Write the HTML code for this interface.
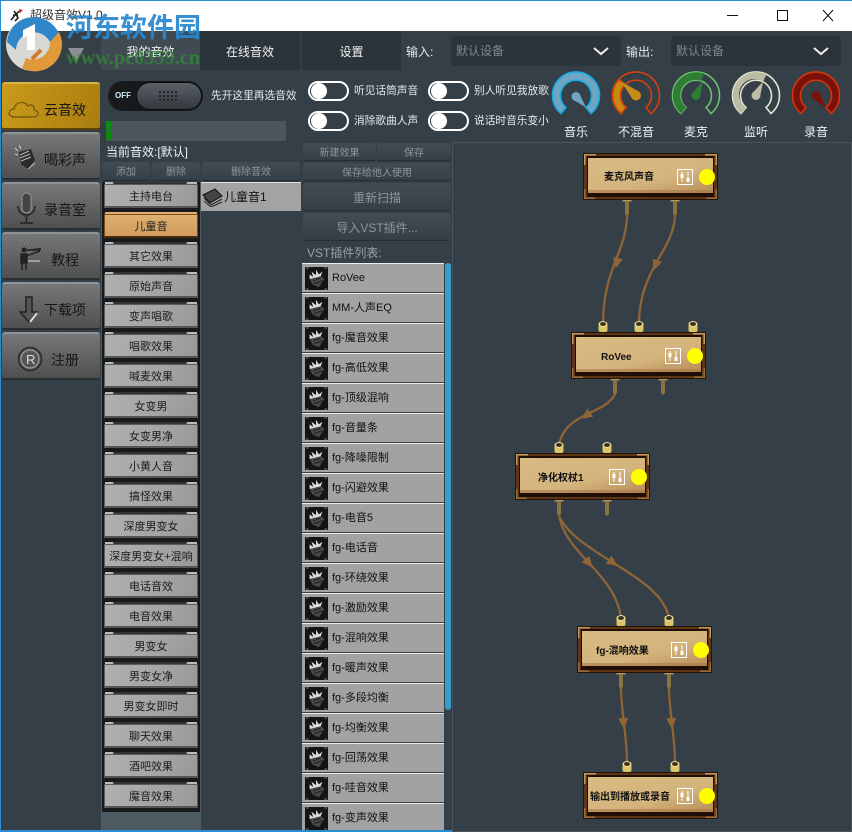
<!DOCTYPE html>
<html><head><meta charset="utf-8"><style>
*{box-sizing:border-box}
html,body{margin:0;padding:0;width:852px;height:832px;overflow:hidden;background:#343f47;font-family:"Liberation Sans","Noto Sans CJK SC",sans-serif}
div,span{position:absolute;white-space:nowrap}
.side{left:2px;width:98px;height:48px;border-radius:3px;border-top:2px solid #8f9396;border-bottom:2px solid #2b2e30;background:repeating-linear-gradient(-55deg,rgba(255,255,255,.05) 0 1px,rgba(0,0,0,.05) 1px 3px),linear-gradient(#77797a,#4d4f50);color:#161616;font-size:14px;line-height:52px}
.side span{top:0}
.side svg{position:absolute;left:0;top:-2px}
.it{left:102px;width:98px;height:30px;background:#17191a}
.it i{position:absolute;left:2px;top:2px;width:94px;height:24px;background:linear-gradient(115deg,#b0b0b0,#a4a4a4 60%,#989898);border:1px solid #5c5c5c;border-bottom:2px solid #555;font-style:normal;text-align:center;font-size:11px;line-height:25px;color:#1c1c1c}
.it b{position:absolute;left:3px;top:0;width:92px;height:2px;background:linear-gradient(90deg,#bbb 8%,#333 10% 88%,#bbb 90%)}
.v{left:302px;width:142px;height:29px;background:#a2a2a2;border-top:1px solid #eee;font-size:11px;color:#111}
.v span{left:30px;top:6px;line-height:16px}
.v svg{position:absolute;left:3px;top:3px}
.btn{background:linear-gradient(#414c54,#353f47);border-bottom:1px solid #262d32;border-radius:3px;color:#8e969b;text-align:center;font-size:10px}
.sw{width:41px;height:20px;border:2px solid #fff;border-radius:10px;background:#343f47}
.sw:after{content:"";position:absolute;left:1px;top:0;width:16px;height:16px;border-radius:50%;background:#fff}
.t{font-size:10.7px;color:#e6e9ea;line-height:14px}
.lab{font-size:12px;color:#f0f2f3;line-height:16px;width:60px;text-align:center;top:124px}
.sel{background:#2b343a;border-radius:3px;top:36px;height:30px;width:170px;color:#7f878c;font-size:12px;line-height:30px;padding-left:5px}
.tab{top:31px;height:39px;color:#f2f2f2;font-size:12px;line-height:43px;text-align:center}
</style></head><body>
<div style="left:0;top:0;width:852px;height:31px;background:#fff;border-top:1px solid #2a8dd4"></div>
<div style="left:0;top:0;width:1px;height:832px;background:#2a8dd4"></div>
<div style="left:0;top:830px;width:852px;height:2px;background:#2a8dd4"></div>
<div style="left:30px;top:7px;font-size:12px;line-height:16px;color:#333">超级音效V1.0</div>
<svg style="position:absolute;left:9px;top:7px" width="16" height="16"><path d="M2 13 7 7 5 4M7 7 12 3M7 7 9 11 6 14M4 8H9" stroke="#222" stroke-width="1.6" fill="none"/><path d="M10 2 14 3 11 6Z" fill="#d22"/></svg>
<svg style="position:absolute;left:725px;top:8px" width="115" height="16"><path d="M2 7.5H13" stroke="#111"/><rect x="52.500" y="2.500" width="10" height="10" fill="none" stroke="#111"/><path d="M98 2 108 13M108 2 98 13" stroke="#111"/></svg>

<div class="tab" style="left:101px;width:99px;background:#3f4a52">我的音效</div>
<div class="tab" style="left:200px;width:100px;background:#2b343a">在线音效</div>
<div class="tab" style="left:302px;width:99px;background:#2b343a">设置</div>
<svg style="position:absolute;left:68px;top:48px" width="16" height="15"><path d="M0 0H16L8 15Z" fill="#8a9093"/></svg>
<div class="t" style="left:406px;top:45px;font-size:12px">输入:</div>
<div class="sel" style="left:451px">默认设备<svg style="position:absolute;left:142px;top:11px" width="16" height="9"><path d="M1 1 8 7 15 1" stroke="#eee" stroke-width="2" fill="none"/></svg></div>
<div class="t" style="left:626px;top:45px;font-size:12px">输出:</div>
<div class="sel" style="left:671px">默认设备<svg style="position:absolute;left:142px;top:11px" width="16" height="9"><path d="M1 1 8 7 15 1" stroke="#eee" stroke-width="2" fill="none"/></svg></div>

<!-- side -->
<div class="side" style="top:82px;background:repeating-linear-gradient(-55deg,rgba(255,230,120,.1) 0 1px,rgba(120,80,0,.08) 1px 3px),linear-gradient(110deg,#cc9c1a,#bb8c12 50%,#a87c0c);border-top-color:#d8b445;border-bottom-color:#5b4405"><span style="left:42px">云音效</span><svg width="42" height="48"><path d="M12 35C5 35 6 27 12 27 13 20 22 18 26 24 30 21 33 25 32 28 38 29 37 35 32 35Z" fill="none" stroke="#7a5c0c" stroke-width="1.4"/></svg></div>
<div class="side" style="top:132px"><span style="left:42px">喝彩声</span><svg width="42" height="48"><path d="M17 20 29 17 33 28 26 37 19 32Z" fill="#2a2a2a"/><path d="M18 23 27 19M18 26 28 22M19 29 29 25M26 37 33 31" stroke="#bbb" fill="none"/><path d="M13 16 16 19M13 22 16 23M17 13 19 17" stroke="#ccc"/></svg></div>
<div class="side" style="top:182px"><span style="left:42px">录音室</span><svg width="42" height="48"><rect x="20" y="11" width="9" height="20" rx="4.500" fill="#444" stroke="#999"/><path d="M16 24C16 36 33 36 33 24M24.500 34V40M18 41H31" fill="none" stroke="#222" stroke-width="1.500"/></svg></div>
<div class="side" style="top:232px"><span style="left:49px">教程</span><svg width="42" height="48"><circle cx="22" cy="18" r="2.500" fill="#222"/><path d="M19 22H25V31H19ZM20 31V38M24 31V38M24 24 38 19M38 16V18H22" stroke="#222" stroke-width="1.500" fill="#222"/><path d="M26 29H38" stroke="#ddd"/></svg></div>
<div class="side" style="top:282px"><span style="left:42px">下载项</span><svg width="42" height="48"><path d="M24 15H30V30H35L27 40 18 30H24Z" fill="#555" stroke="#222" stroke-width="1.500"/><path d="M28 40 35 31" stroke="#ddd" stroke-width="2"/></svg></div>
<div class="side" style="top:332px"><span style="left:49px">注册</span><svg width="42" height="48"><circle cx="28" cy="27" r="11.500" fill="#555" stroke="#2a2a2a" stroke-width="1.500"/><circle cx="28" cy="27" r="9" fill="none" stroke="#aaa"/><text x="24" y="32" font-size="13" font-family="Liberation Sans" fill="#ddd">R</text></svg></div>

<!-- off switch -->
<div style="left:108px;top:81px;width:95px;height:30px;border-radius:15px;background:#17191b"></div>
<div style="left:136px;top:82px;width:66px;height:28px;border-radius:14px;background:linear-gradient(#5a6167,#33383d);border:1px solid #0d0e10"></div>
<div style="left:115px;top:91px;font-size:8px;font-weight:bold;line-height:10px;color:#cfeff5">OFF</div>
<div style="left:158px;top:90px;width:20px;height:12px;background:radial-gradient(circle,#22262a 1px,transparent 1.3px) 0 0/4px 4px"></div>
<div class="t" style="left:211px;top:89px">先开这里再选音效</div>
<div style="left:106px;top:121px;width:180px;height:20px;background:#4b555b"></div>
<div style="left:106px;top:121px;width:5px;height:9px;background:#0a8a10"></div>
<div style="left:106px;top:131px;width:5px;height:9px;background:#0a8a10"></div>
<div style="left:106px;top:144px;font-size:12px;line-height:16px;color:#f0f2f3">当前音效:[默认]</div>

<div class="btn" style="left:102px;top:162px;width:48px;height:19px;line-height:22px">添加</div>
<div class="btn" style="left:152px;top:162px;width:48px;height:19px;line-height:22px">删除</div>
<div class="btn" style="left:202px;top:162px;width:98px;height:19px;line-height:22px">删除音效</div>

<!-- switches -->
<div class="sw" style="left:308px;top:81px"></div><div class="t" style="left:354px;top:84px">听见话筒声音</div>
<div class="sw" style="left:428px;top:81px"></div><div class="t" style="left:474px;top:84px">别人听见我放歌</div>
<div class="sw" style="left:308px;top:111px"></div><div class="t" style="left:354px;top:114px">消除歌曲人声</div>
<div class="sw" style="left:428px;top:111px"></div><div class="t" style="left:474px;top:114px">说话时音乐变小</div>

<!-- gauges -->
<svg style="position:absolute;left:540px;top:60px" width="312" height="70">
<defs><path id="g" d="M-15 18 A23.500 23.500 0 1 1 15 18 L10 12 A15.500 15.500 0 1 0 -10 12 Z"/></defs>
<g transform="translate(36 35.500)"><use href="#g" fill="#6fa5c1" stroke="#14aee6" stroke-width="1.600"/><circle cx="0" cy="1" r="4.500" fill="#6fa5c1"/><path d="M3.300 -2L10 12-3.300 4Z" fill="#6fa5c1"/></g>
<g transform="translate(96 35.500)"><use href="#g" fill="none" stroke="#d8420a" stroke-width="1.600"/><path d="M-15 18 A23.500 23.500 0 0 1 -17 -16 L-11 -11 A15.500 15.500 0 0 0 -10 12Z" fill="#c58a10" stroke="#d8420a" stroke-width="1.600"/><circle cx="0" cy="0" r="5" fill="#c68c18"/><path d="M3.400 -3.600-15 -14-3.400 3.600Z" fill="#c68c18"/></g>
<g transform="translate(156 35.500)"><use href="#g" fill="none" stroke="#6cc070" stroke-width="1.600"/><path d="M-15 18 A23.500 23.500 0 0 1 8 -22 L5 -14.700 A15.500 15.500 0 0 0 -10 12Z" fill="#2e7d32"/><circle cx="0" cy="0" r="4.500" fill="#2e7d32"/><path d="M4 1.900 6.500 -14-4 -1.900Z" fill="#2e7d32"/></g>
<g transform="translate(216 35.500)"><use href="#g" fill="none" stroke="#e5e5d0" stroke-width="1.600"/><path d="M-15 18 A23.500 23.500 0 0 1 10.500 -21 L7 -14 A15.500 15.500 0 0 0 -10 12Z" fill="#bcbca4"/><circle cx="0" cy="0" r="4.500" fill="#bcbca4"/><path d="M4 1.900 7 -14-4 -1.900Z" fill="#bcbca4"/></g>
<g transform="translate(276 35.500)"><use href="#g" fill="#7a120c" stroke="#d8340a" stroke-width="1.600"/><circle cx="0" cy="0" r="4.500" fill="#7a120c"/><path d="M3.300 -3L10 12-3.300 3Z" fill="#7a120c"/></g>
</svg>
<div class="lab" style="left:546px">音乐</div><div class="lab" style="left:606px">不混音</div><div class="lab" style="left:666px">麦克</div><div class="lab" style="left:726px">监听</div><div class="lab" style="left:786px">录音</div>

<!-- effects column -->
<div style="left:101px;top:182px;width:100px;height:648px;background:#4f5b63"></div>
<div class="it" style="top:182px"><b></b><i>主持电台</i></div>
<div class="it" style="top:212px"><b style="background:#e0b070"></b><i style="background:linear-gradient(#e0b070,#cf9c5c);border-color:#7a4a18;border-bottom-color:#4a2a10">儿童音</i></div>
<div class="it" style="top:242px"><b></b><i>其它效果</i></div>
<div class="it" style="top:272px"><b></b><i>原始声音</i></div>
<div class="it" style="top:302px"><b></b><i>变声唱歌</i></div>
<div class="it" style="top:332px"><b></b><i>唱歌效果</i></div>
<div class="it" style="top:362px"><b></b><i>喊麦效果</i></div>
<div class="it" style="top:392px"><b></b><i>女变男</i></div>
<div class="it" style="top:422px"><b></b><i>女变男净</i></div>
<div class="it" style="top:452px"><b></b><i>小黄人音</i></div>
<div class="it" style="top:482px"><b></b><i>搞怪效果</i></div>
<div class="it" style="top:512px"><b></b><i>深度男变女</i></div>
<div class="it" style="top:542px"><b></b><i>深度男变女+混响</i></div>
<div class="it" style="top:572px"><b></b><i>电话音效</i></div>
<div class="it" style="top:602px"><b></b><i>电音效果</i></div>
<div class="it" style="top:632px"><b></b><i>男变女</i></div>
<div class="it" style="top:662px"><b></b><i>男变女净</i></div>
<div class="it" style="top:692px"><b></b><i>男变女即时</i></div>
<div class="it" style="top:722px"><b></b><i>聊天效果</i></div>
<div class="it" style="top:752px"><b></b><i>酒吧效果</i></div>
<div class="it" style="top:782px"><b></b><i>魔音效果</i></div>

<div style="left:201px;top:182px;width:100px;height:29px;background:#a3a3a3;border-top:1px solid #ddd;font-size:12px;line-height:29px;padding-left:23px;color:#111">儿童音1</div>
<svg style="position:absolute;left:202px;top:187px" width="21" height="20"><path d="M1 8 13 2 20 9 8 16Z" fill="#444" stroke="#111"/><path d="M2 11 9 18 20 12M2 14 9 20 20 15" stroke="#222" fill="none"/></svg>

<!-- right column -->
<div class="btn" style="left:303px;top:143px;width:73px;height:18px;line-height:22px">新建效果</div>
<div class="btn" style="left:377px;top:143px;width:74px;height:18px;line-height:22px">保存</div>
<div class="btn" style="left:303px;top:163px;width:148px;height:18px;line-height:22px">保存给他人使用</div>
<div class="btn" style="left:303px;top:183px;width:148px;height:28px;line-height:30px;font-size:12px">重新扫描</div>
<div class="btn" style="left:303px;top:213px;width:148px;height:28px;line-height:30px;font-size:12px">导入VST插件...</div>
<div style="left:307px;top:245px;font-size:12px;line-height:16px;color:#9aa2a7">VST插件列表:</div>
<div style="left:445px;top:263px;width:6px;height:447px;background:#3a9cc8;border-radius:3px"></div>
<svg width="0" height="0" style="position:absolute"><defs><symbol id="ic" viewBox="0 0 25 25"><rect width="25" height="25" fill="#141414"/><path d="M1 1H4M21 1H24M1 24H4M21 24H24" stroke="#888"/><path d="M5 12 14 7 21 13 15 22 8 19Z" fill="#4a4a4a"/><path d="M5 8 9 11 7 5 12 9 12 3 15 8 19 5 17 10 5 13Z" fill="#ddd"/><path d="M9 15 17 12M10 18 19 15" stroke="#222" stroke-width="1.200"/></symbol></defs></svg>
<div class="v" style="top:263px"><svg width="23" height="23"><use href="#ic"/></svg><span>RoVee</span></div>
<div class="v" style="top:293px"><svg width="23" height="23"><use href="#ic"/></svg><span>MM-人声EQ</span></div>
<div class="v" style="top:323px"><svg width="23" height="23"><use href="#ic"/></svg><span>fg-魔音效果</span></div>
<div class="v" style="top:353px"><svg width="23" height="23"><use href="#ic"/></svg><span>fg-高低效果</span></div>
<div class="v" style="top:383px"><svg width="23" height="23"><use href="#ic"/></svg><span>fg-顶级混响</span></div>
<div class="v" style="top:413px"><svg width="23" height="23"><use href="#ic"/></svg><span>fg-音量条</span></div>
<div class="v" style="top:443px"><svg width="23" height="23"><use href="#ic"/></svg><span>fg-降噪限制</span></div>
<div class="v" style="top:473px"><svg width="23" height="23"><use href="#ic"/></svg><span>fg-闪避效果</span></div>
<div class="v" style="top:503px"><svg width="23" height="23"><use href="#ic"/></svg><span>fg-电音5</span></div>
<div class="v" style="top:533px"><svg width="23" height="23"><use href="#ic"/></svg><span>fg-电话音</span></div>
<div class="v" style="top:563px"><svg width="23" height="23"><use href="#ic"/></svg><span>fg-环绕效果</span></div>
<div class="v" style="top:593px"><svg width="23" height="23"><use href="#ic"/></svg><span>fg-激励效果</span></div>
<div class="v" style="top:623px"><svg width="23" height="23"><use href="#ic"/></svg><span>fg-混响效果</span></div>
<div class="v" style="top:653px"><svg width="23" height="23"><use href="#ic"/></svg><span>fg-暖声效果</span></div>
<div class="v" style="top:683px"><svg width="23" height="23"><use href="#ic"/></svg><span>fg-多段均衡</span></div>
<div class="v" style="top:713px"><svg width="23" height="23"><use href="#ic"/></svg><span>fg-均衡效果</span></div>
<div class="v" style="top:743px"><svg width="23" height="23"><use href="#ic"/></svg><span>fg-回荡效果</span></div>
<div class="v" style="top:773px"><svg width="23" height="23"><use href="#ic"/></svg><span>fg-哇音效果</span></div>
<div class="v" style="top:803px;height:27px"><svg width="23" height="23"><use href="#ic"/></svg><span>fg-变声效果</span></div>

<!-- canvas -->
<svg style="position:absolute;left:452px;top:142px" width="400" height="690" viewBox="452 142 400 690">
<defs>
<linearGradient id="tan" x1="0" y1="0" x2="1" y2="1"><stop offset="0" stop-color="#d8ba84"/><stop offset=".6" stop-color="#d4b47c"/><stop offset="1" stop-color="#b88c58"/></linearGradient>
<g id="node"><rect x="0" y="0" width="135" height="47" fill="#24140a"/><rect x="1" y="1" width="133" height="45" fill="#5e3517"/><rect x="4" y="3" width="127" height="41" fill="#1f0f06"/><rect x="5" y="5" width="125" height="35" fill="url(#tan)"/><rect x="5" y="37" width="125" height="3" fill="#a87a48" opacity=".6"/><path d="M1 1H13V2.500H2.500V12H1ZM134 1H122V2.500H132.500V12H134Z" fill="#c39a5e"/><path d="M1 36V46H12V44.500H2.500V36ZM134 36V46H123V44.500H132.500V36Z" fill="#9a6c3a"/><rect x="94.500" y="16.500" width="15" height="15" fill="none" stroke="#fff"/><path d="M99 19V29M105 19V29" stroke="#fff"/><rect x="97.500" y="21" width="3" height="4" fill="#fff"/><rect x="103.500" y="25" width="3" height="4" fill="#fff"/><circle cx="124" cy="24" r="8" fill="#ff0"/></g>
<g id="pt"><rect x="-4.500" y="-10" width="9" height="10" rx="2" fill="#d9c668"/><ellipse cx="0" cy="-8" rx="3.500" ry="2.500" fill="#3b3320" stroke="#efe3a0"/></g>
<g id="pb"><rect x="-4.500" y="0" width="9" height="1.500" fill="#b09a60"/><path d="M-2 1H2V14L0 16-2 14Z" fill="#8a7440"/></g>
<path id="ar" d="M-5 -4H5L1 5H-1Z" fill="#8f6438"/>
</defs>
<rect x="452.500" y="142.500" width="399" height="689" fill="#343f47" stroke="#48535b"/>
<g fill="none" stroke="#8f6438" stroke-width="2.300">
<path d="M627 214C627 252 603 268 603 324"/><path d="M675 214C675 250 639 268 639 324"/>
<path d="M615 394C605 415 565 412 559 445"/>
<path d="M559 516C563 535 575 548 588 562C603 578 618 595 621 618"/><path d="M559 516C568 535 590 548 612 562C638 578 665 595 669 618"/>
<path d="M621 688C621 710 627 735 627 764"/><path d="M669 688C669 710 675 735 675 764"/>
</g>
<use href="#ar" transform="translate(617 262) rotate(15)"/><use href="#ar" transform="translate(656 264) rotate(20)"/>
<use href="#ar" transform="translate(587 415) rotate(55)"/>
<use href="#ar" transform="translate(588 562) rotate(-40)"/><use href="#ar" transform="translate(612 562) rotate(-55)"/>
<use href="#ar" transform="translate(623.500 722) rotate(-5)"/><use href="#ar" transform="translate(671.500 722) rotate(-5)"/>

<use href="#node" x="583" y="153"/><use href="#pb" x="627" y="200"/><use href="#pb" x="675" y="200"/>
<use href="#node" x="571" y="332"/><use href="#pt" x="603" y="332"/><use href="#pt" x="639" y="332"/><use href="#pt" x="693" y="332"/><use href="#pb" x="615" y="379"/><use href="#pb" x="663" y="379"/>
<use href="#node" x="515" y="453"/><use href="#pt" x="559" y="453"/><use href="#pt" x="607" y="453"/><use href="#pb" x="559" y="500"/><use href="#pb" x="607" y="500"/>
<use href="#node" x="577" y="626"/><use href="#pt" x="621" y="626"/><use href="#pt" x="669" y="626"/><use href="#pb" x="621" y="673"/><use href="#pb" x="669" y="673"/>
<use href="#node" x="583" y="772"/><use href="#pt" x="627" y="772"/><use href="#pt" x="675" y="772"/>
<g font-family="Liberation Sans,Noto Sans CJK SC,sans-serif" font-size="10" font-weight="bold" fill="#111">
<text x="604" y="180">麦克风声音</text>
<text x="601" y="360">RoVee</text>
<text x="538" y="481">净化权杖1</text>
<text x="596" y="654">fg-混响效果</text>
<text x="590" y="800">输出到播放或录音</text>
</g>
</svg>

<!-- watermark -->
<svg style="position:absolute;left:4px;top:12px" width="58" height="60">
<circle cx="29" cy="32" r="27" fill="#d8d8d4"/>
<path d="M3 30A27 27 0 0 1 55 22L46 30A18 18 0 0 0 12 38Z" fill="#2f86c8"/>
<path d="M55 20A27 27 0 0 1 18 56L22 46A17 17 0 0 0 46 30Z" fill="#e09a3c"/>
<path d="M19 18 31 12V38H23V24L19 26Z" fill="#fff"/>
<path d="M28 47 37 38" stroke="#d07a2a" stroke-width="4"/>
</svg>
<div style="left:66px;top:12px;font-size:27px;line-height:32px;font-weight:bold;color:rgba(38,135,205,.92)">河东软件园</div>
<div style="left:66px;top:46px;font-family:'Liberation Serif',serif;font-size:20.3px;line-height:24px;font-weight:bold;color:rgba(50,135,55,.8)">www.pc0359.cn</div>
</body></html>
